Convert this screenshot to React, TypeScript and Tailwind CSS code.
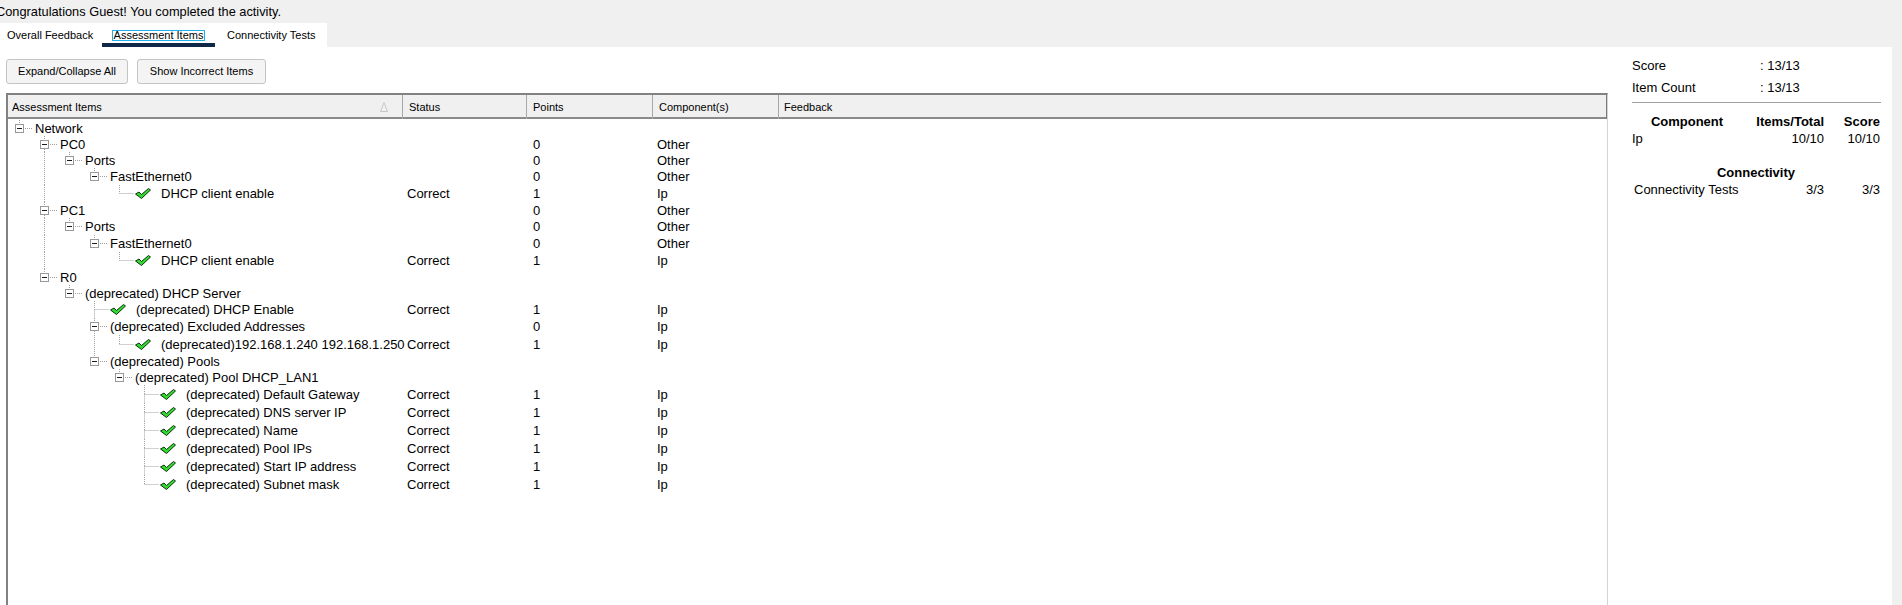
import React from "react";

type Node = {
    label: string;
    status?: string;
    points?: string;
    comp?: string;
    children?: Node[];
};

type Row = {
    node: Node;
    level: number;
    guides: boolean[];
    hasNext: boolean;
};

const ok = (label: string): Node => ({ label, status: "Correct", points: "1", comp: "Ip" });

const pcNode = (name: string): Node => ({
    label: name,
    points: "0",
    comp: "Other",
    children: [
        {
            label: "Ports",
            points: "0",
            comp: "Other",
            children: [
                {
                    label: "FastEthernet0",
                    points: "0",
                    comp: "Other",
                    children: [ok("DHCP client enable")],
                },
            ],
        },
    ],
});

const tree: Node = {
    label: "Network",
    children: [
        pcNode("PC0"),
        pcNode("PC1"),
        {
            label: "R0",
            children: [
                {
                    label: "(deprecated) DHCP Server",
                    children: [
                        ok("(deprecated) DHCP Enable"),
                        {
                            label: "(deprecated) Excluded Addresses",
                            points: "0",
                            comp: "Ip",
                            children: [ok("(deprecated)192.168.1.240 192.168.1.250")],
                        },
                        {
                            label: "(deprecated) Pools",
                            children: [
                                {
                                    label: "(deprecated) Pool DHCP_LAN1",
                                    children: [
                                        ok("(deprecated) Default Gateway"),
                                        ok("(deprecated) DNS server IP"),
                                        ok("(deprecated) Name"),
                                        ok("(deprecated) Pool IPs"),
                                        ok("(deprecated) Start IP address"),
                                        ok("(deprecated) Subnet mask"),
                                    ],
                                },
                            ],
                        },
                    ],
                },
            ],
        },
    ],
};

// row heights taken from the screenshot
const heights = [16, 16, 16, 17, 17, 16, 17, 17, 17, 16, 16, 17, 17, 18, 16, 16, 18, 18, 18, 18, 18, 18];

// guides[a] = ancestor on level a still has a sibling below -> keep its line going
function flatten(node: Node, level: number, guides: boolean[], hasNext: boolean, out: Row[]) {
    out.push({ node, level, guides, hasNext });
    const kids = node.children ?? [];
    kids.forEach((k, i) => {
        flatten(k, level + 1, [...guides, hasNext], i < kids.length - 1, out);
    });
    return out;
}

const rows = flatten(tree, 0, [], false, []);

function CheckIcon({ x, y }: { x: number; y: number }) {
    return (
        <path
            d={`M${x + 0.5} ${y + 6} L${x + 4} ${y + 4} L${x + 6.5} ${y + 6.5} L${x + 13.5} ${y + 0.5} L${x + 15.5} ${y + 2} L${x + 6.5} ${y + 10.5} Z`}
            fill="#30dc30"
            stroke="#0e300e"
            strokeWidth="1"
            strokeLinejoin="round"
        />
    );
}

function TreeGlyph({ row, h }: { row: Row; h: number }) {
    const L = row.level;
    const leaf = !row.node.children;
    const width = leaf ? 53 + 25 * L : 27 + 25 * L;
    const mid = Math.floor(h / 2);
    const cy = mid + 0.5;
    const cx = 11.5 + 25 * L;
    const ry = mid - 4;
    const dot = { stroke: "#a0a0a0", strokeWidth: 1, strokeDasharray: "1 1" };

    return (
        <svg width={width} height={h} className="shrink-0">
            {row.guides.map((g, a) =>
                g ? <line key={a} x1={11.5 + 25 * a} x2={11.5 + 25 * a} y1={0} y2={h} {...dot} /> : null
            )}
            {leaf ? (
                <>
                    <line x1={cx} x2={cx} y1={0} y2={cy} {...dot} />
                    {row.hasNext && <line x1={cx} x2={cx} y1={cy} y2={h} {...dot} />}
                    <line x1={cx} x2={26 + 25 * L} y1={cy} y2={cy} {...dot} />
                    <CheckIcon x={27 + 25 * L} y={mid - 5} />
                </>
            ) : (
                <>
                    <line x1={cx} x2={cx} y1={0} y2={ry} {...dot} />
                    {row.hasNext && <line x1={cx} x2={cx} y1={ry + 9} y2={h} {...dot} />}
                    <line x1={17 + 25 * L} x2={25 + 25 * L} y1={cy} y2={cy} {...dot} />
                    <rect x={7.5 + 25 * L} y={ry + 0.5} width={8} height={8} fill="#fff" stroke="#999" strokeWidth="1" />
                    <line x1={9 + 25 * L} x2={14 + 25 * L} y1={cy} y2={cy} stroke="#1a1a1a" strokeWidth="1" />
                </>
            )}
        </svg>
    );
}

export default function App() {
    return (
        <div className="w-[1902px] h-[605px] bg-[#f0f0f0] overflow-hidden text-black font-['Liberation_Sans',Arial,sans-serif]">
            <div className="h-[23px] text-[12.8px] leading-[23px] -ml-[4px] whitespace-nowrap">
                Congratulations Guest! You completed the activity.
            </div>

            {/* tabs */}
            <div className="flex h-[24px]">
                <div className="flex w-[327px] bg-white text-[11px] leading-[24px]">
                    <div className="w-[102px] pl-[7px]">Overall Feedback</div>
                    <div className="w-[113px] flex flex-col items-center">
                        <div className="mt-[7px] h-[11px] px-[1px] border border-[#22aee6] leading-[9px] flex items-center">
                            Assessment Items
                        </div>
                        <div className="mt-[2px] w-full h-[4px] bg-[#0f2848]" />
                    </div>
                    <div className="pl-[12px]">Connectivity Tests</div>
                </div>
            </div>

            {/* main */}
            <div className="flex h-[558px] w-[1892px] bg-white">
                <div className="w-[1608px] flex flex-col pl-[6px] pt-[12px]">
                    <div className="flex gap-[9px] text-[11px]">
                        <button className="w-[122px] h-[25px] bg-[#f4f4f4] border border-[#c4c4c4] rounded-[3px]">
                            Expand/Collapse All
                        </button>
                        <button className="w-[129px] h-[25px] bg-[#f4f4f4] border border-[#c4c4c4] rounded-[3px]">
                            Show Incorrect Items
                        </button>
                    </div>

                    <div className="mt-[9px] flex-1 border-l-2 border-t-2 border-[#828282] border-r border-r-[#d4d4d4]">
                        <div className="grid grid-cols-[395px_124px_126px_126px_1fr] h-[24px] bg-[#f0f0f0] border-b-2 border-[#8a8a8a] text-[11px] leading-[24px]">
                            <div className="flex items-center justify-between pl-[4px] pr-[14px] border-r border-[#a8a8a8]">
                                <span>Assessment Items</span>
                                <svg width="8" height="10">
                                    <path d="M4 0.5 L7.5 9.5 L0.5 9.5 Z" fill="none" stroke="#c8c8c8" strokeWidth="1" />
                                </svg>
                            </div>
                            <div className="pl-[6px] border-r border-[#a8a8a8]">Status</div>
                            <div className="pl-[6px] border-r border-[#a8a8a8]">Points</div>
                            <div className="pl-[6px] border-r border-[#a8a8a8]">Component(s)</div>
                            <div className="pl-[5px] border-r border-[#7a7a7a]">Feedback</div>
                        </div>

                        <div className="pt-[1px] text-[13px]">
                            {rows.map((r, i) => {
                                const h = heights[i] ?? 17;
                                return (
                                    <div
                                        key={i}
                                        className="grid grid-cols-[395px_124px_126px_126px_1fr] items-center whitespace-nowrap"
                                        style={{ height: h }}
                                    >
                                        <div className="flex items-center h-full">
                                            <TreeGlyph row={r} h={h} />
                                            <span className="leading-[15px]">{r.node.label}</span>
                                        </div>
                                        <div className="pl-[4px] leading-[15px]">{r.node.status}</div>
                                        <div className="pl-[6px] leading-[15px]">{r.node.points}</div>
                                        <div className="pl-[4px] leading-[15px]">{r.node.comp}</div>
                                        <div />
                                    </div>
                                );
                            })}
                        </div>
                    </div>
                </div>

                {/* summary */}
                <div className="flex-1 pl-[24px] pt-[8px] text-[13px]">
                    <div className="flex h-[22px] items-center">
                        <span className="w-[128px]">Score</span>
                        <span>: 13/13</span>
                    </div>
                    <div className="flex h-[22px] items-center">
                        <span className="w-[128px]">Item Count</span>
                        <span>: 13/13</span>
                    </div>
                    <div className="w-[249px] mt-[3px] border-t border-[#a0a0a0]" />
                    <div className="grid grid-cols-[110px_82px_56px] w-[249px] mt-[10px] leading-[17px]">
                        <div className="font-bold text-center">Component</div>
                        <div className="font-bold text-right">Items/Total</div>
                        <div className="font-bold text-right">Score</div>
                        <div>Ip</div>
                        <div className="text-right">10/10</div>
                        <div className="text-right">10/10</div>
                        <div className="col-span-3 h-[17px]" />
                        <div className="col-span-3 font-bold text-center">Connectivity</div>
                        <div className="pl-[2px] whitespace-nowrap">Connectivity Tests</div>
                        <div className="text-right">3/3</div>
                        <div className="text-right">3/3</div>
                    </div>
                </div>
            </div>
        </div>
    );
}
